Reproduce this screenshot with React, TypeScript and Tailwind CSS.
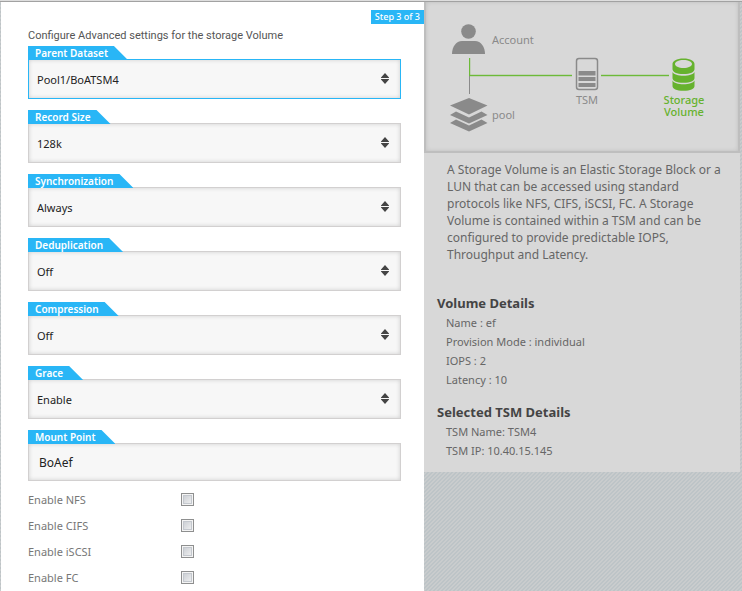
import { useState } from "react";
import type { ReactNode } from "react";

const insetShadow = "shadow-[inset_0_0_4px_rgba(0,0,0,0.16)]";

function FieldLabel({ htmlFor, children }: { htmlFor: string; children: ReactNode }) {
  return (
    <label
      htmlFor={htmlFor}
      className="relative z-10 block h-[14px] w-fit bg-[#29b6f6] pl-[7px] pr-5 text-[10px] font-semibold leading-[15px] text-white [clip-path:polygon(0_0,calc(100%-14px)0,100%_100%,0_100%)]"
    >
      {children}
    </label>
  );
}

function SelectField({ id, label, options, active = false }: { id: string; label: string; options: string[]; active?: boolean }) {
  return (
    <div>
      <FieldLabel htmlFor={id}>{label}</FieldLabel>
      <div className="relative -mt-px">
        <select
          id={id}
          className={`block h-10 w-full appearance-none border bg-[#f7f7f7] px-2 pt-[2px] text-[11px] text-[#222] outline-none ${insetShadow} ${active ? "border-[#29b6f6]" : "border-[#d2d0d0]"}`}
        >
          {options.map((o) => (
            <option key={o}>{o}</option>
          ))}
        </select>
        <svg className="pointer-events-none absolute right-3 top-[14px]" width="8" height="11" viewBox="0 0 8 11" fill="#444" aria-hidden="true">
          <path d="M4 0 8 4.500V5H0v-.5Z M0 6h8v.5L4 11 0 6.500Z" />
        </svg>
      </div>
    </div>
  );
}

function ToggleRow({ id, label }: { id: string; label: string }) {
  const [on, setOn] = useState(false);
  return (
    <div className="flex h-[26px] items-center">
      <label htmlFor={id} className="w-[153px] pt-[3px] text-[11px] text-[#777]">
        {label}
      </label>
      <input
        id={id}
        type="checkbox"
        checked={on}
        onChange={(e) => setOn(e.target.checked)}
        className="size-[13px] appearance-none border border-[#8e8f8f] bg-linear-to-br from-[#c4c8ce] to-[#f6f6f6] shadow-[inset_0_0_0_1px_#f4f4f4,inset_0_0_0_2px_#c4c8ce] checked:from-[#29b6f6]"
      />
    </div>
  );
}

function Topology() {
  return (
    <div className="relative h-[151px] border-2 border-t-0 border-[#bebebe] text-[11px] leading-[12px] text-[#8a8a8a] shadow-[inset_0_0_4px_rgba(0,0,0,0.12)]">
      <svg className="absolute left-0 top-0" width="312" height="149" viewBox="426 2 312 149" aria-hidden="true">
        <g fill="#8a8a8a">
          <circle cx="468.500" cy="31.500" r="7.300" />
          <path d="M452 54c0-7 4-13 10-13h13c6 0 10 6 10 13Z" />
          <path d="m469 98 18.500 7.500-18.500 9-19-9Z" />
          <path d="m450 115 6-3.500 13 6 12.500-6 6 3.500-18.500 8.500Z" />
          <path d="m450 123 6-3.500 13 6 12.500-6 6 3.500-18.500 8.500Z" />
          <rect x="578.500" y="71" width="17" height="4.500" />
          <rect x="578.500" y="77" width="17" height="4" />
          <rect x="578.500" y="83" width="17" height="4" />
        </g>
        <rect x="576.500" y="58.500" width="21" height="31" rx="2.500" fill="none" stroke="#8a8a8a" strokeWidth="1.500" />
        <rect x="469" y="76" width="1" height="18" fill="#8a8a8a" />
        <g fill="#6cba38">
          <rect x="469" y="58" width="1.200" height="18" />
          <rect x="469" y="74.800" width="103" height="1.400" />
          <rect x="601" y="74.800" width="68" height="1.400" />
        </g>
        <g fill="#66b22e">
          <path fillRule="evenodd" d="M672.500 64c0-3 4-5.500 11-5.500s11 2.500 11 5.500v5c0 3-4 5-11 5s-11-2-11-5Zm2.500 0c0 2.300 3.500 4 8.500 4s8.500-1.700 8.500-4-3.500-4-8.500-4-8.500 1.700-8.500 4Z" />
          <path d="M672.500 72c1.500 2.500 5.500 3.800 11 3.800s9.500-1.300 11-3.800v6c0 3-4 4.800-11 4.800s-11-1.800-11-4.800Z" />
          <path d="M672.500 80.500c1.500 2.500 5.500 3.800 11 3.800s9.500-1.300 11-3.800v5.500c0 3-4 4.800-11 4.800s-11-1.800-11-4.800Z" />
        </g>
      </svg>
      <span className="absolute left-[66px] top-8">Account</span>
      <span className="absolute left-[66px] top-[107px]">pool</span>
      <span className="absolute left-[141px] top-[92px] w-10 text-center">TSM</span>
      <span className="absolute left-[232px] top-[92px] w-[52px] text-center font-medium text-[#66b22e]">
        Storage Volume
      </span>
    </div>
  );
}

function Details({ title, rows }: { title: string; rows: string[] }) {
  return (
    <section className="pl-[13px]">
      <h2 className="text-[13px] font-bold leading-[20px] text-[#444]">{title}</h2>
      <ul className="pl-[9px] text-[11px] leading-[19px] text-[#666]">
        {rows.map((r) => (
          <li key={r}>{r}</li>
        ))}
      </ul>
    </section>
  );
}

export default function App() {
  const [mount, setMount] = useState("BoAef");
  return (
    <div className="min-h-screen border-t border-[#dedede] bg-[#bdc4c7] bg-[linear-gradient(135deg,#c9cccd_25%,transparent_25%_50%,#c9cccd_50%_75%,transparent_75%)] bg-size-[4px_4px] font-['Noto_Sans','Open_Sans',sans-serif]">
      <div className="flex min-h-[590px] border-t border-[#a2a2a2] pl-px pr-[2px]">
        <main className="flex-1 bg-white">
          <div className="flex justify-end pt-2">
            <span className="h-[14px] bg-[#29b6f6] px-[4px] text-[9px] font-medium leading-[14px] text-white">Step 3 of 3</span>
          </div>
          <form className="pl-[27px] pr-[23px]">
            <p className="pb-[2px] pt-[3px] font-[Roboto,sans-serif] text-[11px] leading-[17px] text-[#555]">Configure Advanced settings for the storage Volume</p>
            <div className="flex flex-col gap-[11px]">
              <SelectField id="dataset" label="Parent Dataset" options={["Pool1/BoATSM4"]} active />
              <SelectField id="record" label="Record Size" options={["128k", "64k", "32k"]} />
              <SelectField id="sync" label="Synchronization" options={["Always", "Standard"]} />
              <SelectField id="dedup" label="Deduplication" options={["Off", "On"]} />
              <SelectField id="compression" label="Compression" options={["Off", "On"]} />
              <SelectField id="grace" label="Grace" options={["Enable", "Disable"]} />
              <div>
                <FieldLabel htmlFor="mount">Mount Point</FieldLabel>
                <input
                  id="mount"
                  value={mount}
                  onChange={(e) => setMount(e.target.value)}
                  className={`-mt-px block h-[38px] w-full border border-[#d2d0d0] bg-[#f7f7f7] px-[10px] text-[12px] text-[#222] outline-none ${insetShadow}`}
                />
              </div>
            </div>
            <div className="pt-[5px]">
              <ToggleRow id="nfs" label="Enable NFS" />
              <ToggleRow id="cifs" label="Enable CIFS" />
              <ToggleRow id="iscsi" label="Enable iSCSI" />
              <ToggleRow id="fc" label="Enable FC" />
            </div>
          </form>
        </main>
        <aside className="w-[316px] self-start bg-[#d8d8d8] pb-3">
          <Topology />
          <p className="pb-[30px] pl-[23px] pr-4 pt-2 text-[12px] leading-[17px] text-[#666]">
            A Storage Volume is an Elastic Storage Block or a LUN that can be accessed using standard protocols like NFS, CIFS, iSCSI, FC. A Storage Volume is contained within a TSM and can be configured to provide predictable IOPS, Throughput and Latency.
          </p>
          <div className="flex flex-col gap-[13px]">
            <Details title="Volume Details" rows={["Name : ef", "Provision Mode : individual", "IOPS : 2", "Latency : 10"]} />
            <Details title="Selected TSM Details" rows={["TSM Name: TSM4", "TSM IP: 10.40.15.145"]} />
          </div>
        </aside>
      </div>
    </div>
  );
}
